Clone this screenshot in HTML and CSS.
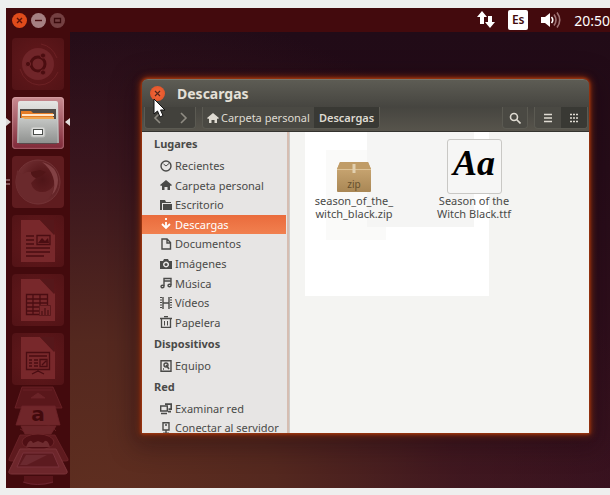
FILE: index.html
```html
<!DOCTYPE html>
<html lang="es">
<head>
<meta charset="utf-8">
<title>Descargas</title>
<link rel="stylesheet" href="styles.css">
</head>
<body>
<div class="screen">
  <header class="panel">
    <div class="panel-buttons">
      <button class="round close" aria-label="Cerrar"><svg viewBox="0 0 15 15"><path d="M5 5l5 5M10 5l-5 5" stroke="#5c1208" stroke-width="1.4"/></svg></button>
      <button class="round" aria-label="Minimizar"><svg viewBox="0 0 15 15"><path d="M4 7.500h7" stroke="#4a1012" stroke-width="1.4"/></svg></button>
      <button class="round dim" aria-label="Maximizar"><svg viewBox="0 0 15 15"><path d="M4.500 5.500h6v4h-6z" fill="none" stroke="#3a0a0c" stroke-width="1.3"/></svg></button>
    </div>
    <div class="indicators">
      <svg class="net" viewBox="0 0 18 18"><path d="M5 0l5 6H7v7H3V6H0zM13 17l-5-6h3V5h4v6h3z" fill="#fff"/></svg>
      <span class="lang">Es</span>
      <svg class="sound" viewBox="0 0 20 18"><path d="M0 6h4l5-4v14l-5-4H0z" fill="#fff"/><g fill="none" stroke-width="1.600"><path d="M10.500 6q2.500 3 0 6" stroke="#fff"/><path d="M13 3.500q4 5.500 0 11M16 1.500q5.500 7.500 0 15" stroke="#a07476"/></g></svg>
      <time>20:50</time>
    </div>
  </header>
  <div class="workspace">
    <nav class="launcher" aria-label="Lanzador">
      <button class="tile" aria-label="Inicio"><svg viewBox="0 0 52 52"><circle cx="26" cy="26" r="16" fill="#702529"/><circle cx="26" cy="26" r="7" fill="none" stroke="#4b0d10" stroke-width="3"/><g fill="#4b0d10" stroke="#702529"><circle cx="16" cy="26" r="2.600"/><circle cx="31" cy="17.500" r="2.600"/><circle cx="31" cy="34.500" r="2.600"/></g><path d="M8 31q5 15 19 16 13 0 19-13M45 20q-5-12-16-14" fill="none" stroke="#78282b" opacity=".6"/></svg></button>
      <button class="tile active" aria-label="Archivos"><svg viewBox="0 0 52 52">
        <defs><linearGradient id="cab" x2="0" y2="1"><stop offset="0" stop-color="#e6e6e4"/><stop offset="1" stop-color="#a4a6a4"/></linearGradient><linearGradient id="front" x2="0" y2="1"><stop offset="0" stop-color="#c6c8c6"/><stop offset="1" stop-color="#8f918f"/></linearGradient></defs>
        <path d="M6 6q0-2 2-2h36q2 0 2 2l1 40H5z" fill="url(#cab)"/><path d="M8 12h36v13H8z" fill="#504b47"/><path d="M9 14h10l2 2h20v10H9z" fill="#e57c26"/><path d="M10 17h32v2H10z" fill="#ffe7cb"/><path d="M10 20h32v2H10z" fill="#efa54f"/>
        <path d="M7 21h4l2 1h32v24H7z" fill="url(#front)"/><path d="M7 46h38v1H7z" fill="#5a4a4c"/><rect x="19" y="30" width="14" height="10" rx="2" fill="#d7d7d5" stroke="#b5b7b5"/><rect x="21.500" y="32.500" width="9" height="5" fill="#fff" stroke="#494c49"/></svg></button>
      <button class="tile flat" aria-label="Navegador"><svg viewBox="0 0 52 52">
        <defs><radialGradient id="globe" cx=".6" cy=".45"><stop offset="0" stop-color="#4f1518"/><stop offset=".5" stop-color="#5a1b1e"/><stop offset="1" stop-color="#6b2a2d"/></radialGradient></defs>
        <circle cx="26" cy="26" r="22" fill="url(#globe)" stroke="#733336"/><path d="M5 14q2 3 6 4 4-3 8-2 0 4 5 6l-5 5q2 8 9 9 9 1 14-7-1 16-16 18Q5 46 4 25z" fill="#6a292c"/><path d="M19 16l9-2 6 2-5 4-5 2q-5-2-5-6z" fill="#501517"/><path d="M30 6q15 4 16 18 0 9-6 15 4-10 1-18-3-9-11-15z" fill="#824144"/></svg></button>
      <button class="tile" aria-label="Documento de texto"><svg viewBox="0 0 52 52"><path d="M9 5h19l15 15v27H9z" fill="#78282b"/><path d="M28 5h14v15z" fill="#56171a"/><path d="M14 21h8M14 25h8M14 29h8M14 33h24M14 37h24M14 41h18" stroke="#4a0d12" stroke-width="1.600"/><path d="M25 20.500h13v9H25z" fill="none" stroke="#4a0d12" stroke-width="1.300"/><path d="M26 28l4-5 3 3 3-3 1 5z" fill="#4a0d12"/></svg></button>
      <button class="tile" aria-label="Hoja de cálculo"><svg viewBox="0 0 52 52"><path d="M9 5h19l15 15v27H9z" fill="#78282b"/><path d="M28 5h14v15z" fill="#56171a"/><path d="M14.500 20.500h21v20h-21zM14 25h22M14 29h22M14 33h22M14 37h22M21 20v21M28 20v21" fill="none" stroke="#4a0d12" stroke-width="1.300"/><path d="M27.500 31.500h11v10h-11z" fill="#78282b" stroke="#5b191c"/><path d="M30 41v-4M33 41v-7M36 41v-5" stroke="#5b191c" stroke-width="2"/></svg></button>
      <button class="tile" aria-label="Presentación"><svg viewBox="0 0 52 52"><path d="M9 4h19l15 15v27H9z" fill="#78282b"/><path d="M28 4h14v15z" fill="#56171a"/><path d="M14.500 19.500h23v17h-23zM26 36v3M20 41l6-3 6 3M17 23h18M17 27h3M17 30h3M17 33h3M22 27h4M22 30h4M22 33h4M28 26.500h7v7h-7zM30 32l4-4" fill="none" stroke="#4a0d12" stroke-width="1.300"/></svg></button>
      <svg class="stack" viewBox="0 0 64 105" aria-hidden="true">
        <g stroke="#6d2529" stroke-width=".8">
        <path d="M16 2h31l9 21H9z" fill="#5a171b"/><path d="M17 5h29M25 13l7-5 7 5z" fill="#6a2428"/>
        <path d="M16 21h33l5 19H10z" fill="#70262a"/>
        <path d="M15 41h35l-5 8H19z" fill="#6b2529"/><path d="M14 44q10 7 20 0t16 2" fill="none"/>
        <path d="M14 50h35l13 24q1 2-2 2H5q-3 0-2-2z" fill="#5e1a1e"/></g>
        <ellipse cx="32" cy="57" rx="16" ry="8" fill="#4f0f14" stroke="#6d2529"/><path d="M20 62q4-10 7-4l5-2 5 2q4-6 7 4z" fill="#6f2c30"/>
        <path d="M14 64h36l11 22q1 3-3 3H6q-4 0-3-3z" fill="#6d262b" stroke="#7b3339"/><path d="M17 68h30l6 14H11z" fill="#5c1a1f" stroke="#79303a"/><path d="M20 70h21L21 80h-7z" fill="#6b292f"/>
        <path d="M18 91h29v7q-14 4-29 0z" fill="#59151a"/><path d="M17 97q14 5 30 0" stroke="#6b2530" fill="none"/>
        <text x="32" y="36" class="shop">a</text>
      </svg>
      <svg class="marker left" viewBox="0 0 5 8"><path d="M0 0l5 4-5 4z"/></svg>
      <svg class="marker right" viewBox="0 0 5 8"><path d="M5 0L0 4l5 4z"/></svg>
      <span class="pips"></span>
    </nav>
    <main class="desktop">
      <section class="window">
        <header class="titlebar">
          <button class="round close" aria-label="Cerrar ventana"><svg viewBox="0 0 15 15"><path d="M5 5l5 5M10 5l-5 5" stroke="#55251a" stroke-width="1.200"/></svg></button>
          <h1>Descargas</h1>
          <svg class="pointer" viewBox="0 0 13 20"><path d="M1 1v15l3.500-3 2.500 6 3-1.500L7.500 12H12z" fill="#fff" stroke="#111"/></svg>
        </header>
        <div class="toolbar">
          <div class="group history">
            <button aria-label="Atrás"><svg viewBox="0 0 12 12"><path d="M8 1L3 6l5 5"/></svg></button>
            <button aria-label="Adelante"><svg viewBox="0 0 12 12"><path d="M4 1l5 5-5 5"/></svg></button>
          </div>
          <div class="group path">
            <button><svg viewBox="0 0 12 12"><path d="M6 1l6 5-1 1-1-.6V11H7.500V8h-3v3H2V6.400L1 7 0 6z" fill="#dfdbd2"/></svg>Carpeta personal</button>
            <button class="pressed">Descargas</button>
          </div>
          <div class="group search"><button aria-label="Buscar"><svg viewBox="0 0 12 12"><circle cx="5" cy="5" r="3.500"/><path d="M7.500 7.500l4 4"/></svg></button></div>
          <div class="group views">
            <button aria-label="Lista"><svg viewBox="0 0 12 12"><path d="M2 2.500h8M2 6h8M2 9.500h8"/></svg></button>
            <button class="pressed" aria-label="Cuadrícula"><svg viewBox="0 0 12 12"><path d="M2 2.500h8M2 6h8M2 9.500h8" stroke-dasharray="2 1"/></svg></button>
          </div>
        </div>
        <div class="content">
          <aside class="sidebar">
            <h2>Lugares</h2>
            <ul class="places">
              <li><a href="#"><svg viewBox="0 0 12 12"><circle cx="6" cy="6" r="5"/><path d="M3.500 4L6 6l3-2.500" stroke-width="1"/></svg>Recientes</a></li>
              <li><a href="#"><svg viewBox="0 0 12 12"><path class="solid" d="M6 1l6 5-1 1-1-.6V11H7.500V8h-3v3H2V6.400L1 7 0 6z"/></svg>Carpeta personal</a></li>
              <li><a href="#"><svg viewBox="0 0 12 12"><path class="solid" d="M0 1h5l1 2h5v1H2v7H0zM3 5h9v6H3z"/></svg>Escritorio</a></li>
              <li><a href="#" class="selected"><svg viewBox="0 0 12 12"><path d="M2 6l4 4 4-4M6 4v6M6 0v2" stroke-width="1.800"/></svg>Descargas</a></li>
              <li><a href="#"><svg viewBox="0 0 12 12"><path d="M2 1h5l3.500 3.500V11H2zM7 1v4h3"/></svg>Documentos</a></li>
              <li><a href="#"><svg viewBox="0 0 12 12"><path class="solid" fill-rule="evenodd" d="M0 3h3l1-2h4l1 2h3v8H0zM6 3.500a3 3 0 1 0 .1 0z"/><circle class="solid" cx="6" cy="6.500" r="1.500"/></svg>Imágenes</a></li>
              <li><a href="#"><svg viewBox="0 0 12 12"><path d="M4 9V1.500h7V8M4 4h7"/><ellipse cx="2.500" cy="9.500" rx="1.500" ry="1.200"/><ellipse cx="9.500" cy="8.500" rx="1.500" ry="1.200"/></svg>Música</a></li>
              <li><a href="#"><svg viewBox="0 0 12 12"><path d="M3 0v12M9 0v12M3 6h6"/><path d="M1 0v12M11 0v12" stroke-dasharray="1 1.500" stroke-width="2"/></svg>Vídeos</a></li>
              <li><a href="#"><svg viewBox="0 0 12 12"><path d="M0 2.500h12M4 .700h4M1.500 3v8.300h9V3" stroke-width="1.300"/><path d="M4.500 5v4.500M7.500 5v4.500" stroke-width="1"/></svg>Papelera</a></li>
            </ul>
            <h2>Dispositivos</h2>
            <ul>
              <li><a href="#"><svg viewBox="0 0 12 12"><path d="M1 .700h10v10.600H1z"/><circle cx="6" cy="5" r="2"/><path d="M6 5l3 4M3 9h1" stroke-width="1.600"/></svg>Equipo</a></li>
            </ul>
            <h2>Red</h2>
            <ul>
              <li><a href="#"><svg viewBox="0 0 12 12"><path d="M.700 3h6.600v5H.700zM1 10.500h6"/><path d="M5 1.200h6.300v5H8.500M8 8.700h3" stroke-width="1.800"/></svg>Examinar red</a></li>
              <li><a href="#"><svg viewBox="0 0 12 12"><path d="M3 .700h6V8H3zM6 8v3M3 11.300h6M5 3h2"/></svg>Conectar al servidor</a></li>
            </ul>
          </aside>
          <div class="files">
            <figure class="file">
              <div class="thumb"><svg class="box" viewBox="0 0 34 30"><defs><linearGradient id="card" x2="0" y2="1"><stop offset="0" stop-color="#cfac78"/><stop offset="1" stop-color="#a98755"/></linearGradient></defs><path d="M3 0h28l3 7v22q0 1-1 1H1q-1 0-1-1V7z" fill="url(#card)"/><path d="M3 0h28l3 7H0z" fill="#c09c67"/><path d="M0 7.500h34" stroke="#ddc296"/><path d="M15.500 2h3v9h-3z" fill="#e2d0b0"/><text x="17" y="26" class="zip">zip</text></svg></div>
              <figcaption><span>season_of_the_</span><span>witch_black.zip</span></figcaption>
            </figure>
            <figure class="file">
              <div class="thumb"><span class="preview">Aa</span></div>
              <figcaption><span>Season of the</span><span>Witch Black.ttf</span></figcaption>
            </figure>
          </div>
        </div>
      </section>
    </main>
  </div>
</div>
</body>
</html>
```
FILE: styles.css
```css
* { box-sizing: border-box; }

body {
  margin: 0;
  height: 100vh;
  padding: 8px 0 7px 6px;
  overflow: hidden;
  background: #eeefee;
  font: 11px/13px "Noto Sans", "Open Sans", sans-serif;
  color: #4a4a48;
}

button {
  border: 0;
  padding: 0;
  margin: 0;
  background: none;
  font: inherit;
  color: inherit;
}

svg { display: block; flex: none; }
ul { list-style: none; margin: 0; padding: 0; }
h1, h2, figure { margin: 0; }

.screen { height: 100%; display: flex; flex-direction: column; }

.panel {
  display: flex;
  justify-content: space-between;
  height: 24px;
  flex: none;
  background: #430a0d;
  color: #fff;
}

.panel-buttons { display: flex; gap: 4px; align-items: center; padding-left: 6px; }
.round { width: 15px; height: 15px; border-radius: 50%; background: #a58082; flex: none; }
.round.close { background: #df4b1b; }
.round.dim { background: #744042; }

.indicators { display: flex; align-items: center; gap: 13px; font-size: 14px; }
.net { width: 18px; height: 18px; }
.sound { width: 20px; height: 18px; }
.lang {
  width: 20px;
  height: 20px;
  border-radius: 2px;
  background: #fff;
  color: #430a0d;
  font-size: 12px;
  font-weight: 600;
  line-height: 20px;
  text-align: center;
}

.workspace { display: flex; flex: 1; min-height: 0; }

.launcher {
  position: relative;
  display: flex;
  flex-direction: column;
  align-items: center;
  gap: 7px;
  width: 64px;
  flex: none;
  padding-top: 6px;
  overflow: hidden;
  background: #430a0d;
}

.tile {
  width: 52px;
  height: 52px;
  flex: none;
  border-radius: 4px;
  background: radial-gradient(#64191c, #521316);
}
.tile.flat { background: #5f1c1f; }
.tile.active {
  background: linear-gradient(#c98c91, #7f2837);
  box-shadow: inset 0 0 2px #f0c5c8;
}
.stack { width: 64px; height: 105px; margin-top: -7px; }
.shop { font: bold 20px "DejaVu Sans", sans-serif; text-anchor: middle; fill: #430a0d; }

.marker { position: absolute; top: 86px; width: 5px; height: 8px; fill: #e0dcda; }
.marker.left { left: 0; }
.marker.right { right: 0; }
.pips {
  position: absolute;
  left: 0;
  top: 147px;
  width: 4px;
  height: 6px;
  border: solid #86565a;
  border-width: 2px 0;
}

.desktop {
  flex: 1;
  min-width: 0;
  display: flex;
  padding: 47px 21px 55px 72px;
  background:
    radial-gradient(ellipse at 5% 105%, #602f20 0%, #54281f 25%, rgba(70, 28, 32, 0.6) 50%, rgba(50, 15, 28, 0) 75%),
    linear-gradient(#210b17 0%, #260c19 30%, #37111f 100%);
}

.window {
  flex: 1;
  min-width: 0;
  display: flex;
  flex-direction: column;
  border-radius: 6px 6px 0 0;
  box-shadow: 0 0 3px 1px #a93b10, 0 0 7px 2px #872b0c, 0 6px 24px 8px rgba(24, 5, 12, 0.35);
}

.titlebar {
  position: relative;
  display: flex;
  align-items: center;
  gap: 12px;
  height: 28px;
  flex: none;
  padding: 0 8px;
  border-top: 1px solid #77756b;
  border-radius: 6px 6px 0 0;
  background: linear-gradient(#5d5c54, #464540);
}
.titlebar .round { background: radial-gradient(#f4693c, #dd4f24); }
.titlebar h1 { font-size: 14px; line-height: 20px; color: #e4e0d7; }
.pointer { position: absolute; left: 11px; top: 17px; width: 13px; height: 22px; z-index: 1; }

.toolbar {
  display: flex;
  align-items: flex-start;
  height: 25px;
  flex: none;
  padding: 0 1px 0 2px;
  border-bottom: 1px solid #34332f;
  background: linear-gradient(#464540, #57544c);
  color: #dfdbd2;
}
.toolbar svg { width: 12px; height: 12px; fill: none; stroke: #dfdbd2; stroke-width: 1.6; }
.group {
  display: flex;
  height: 22px;
  border: 1px solid #5b5a52;
  border-top: 0;
  border-radius: 0 0 4px 4px;
  background: #4a4943;
  overflow: hidden;
}
.group button { display: flex; align-items: center; justify-content: center; gap: 2px; flex: 1; }
.group .pressed { background: #393934; font-weight: 600; }
.history { width: 52px; margin-right: 6px; background: #42413c; }
.history svg { stroke: #8f8c83; }
.path button { flex: none; padding: 0 4px; }
.path .pressed { padding: 0 5px; }
.path svg { stroke: none; }
.search { width: 26px; margin-left: auto; margin-right: 6px; }
.views { width: 54px; }

.content { display: flex; flex: 1; min-height: 0; background: #f4f4f2; }

.sidebar {
  width: 148px;
  flex: none;
  overflow: hidden;
  border-right: 1px solid #cfcdca;
  background: linear-gradient(90deg, transparent 145px, #d6bdb1 145px), #e7e5e4;
}
.sidebar h2 { padding-left: 12px; font-size: 11px; line-height: 24px; font-weight: 700; }
.sidebar ul { display: grid; grid-auto-rows: 19px; }
.sidebar .places { height: 176px; grid-auto-rows: 1fr; }
.sidebar a {
  display: flex;
  align-items: center;
  gap: 3px;
  height: 100%;
  width: 144px;
  padding-left: 18px;
  color: inherit;
  text-decoration: none;
  white-space: nowrap;
}
.sidebar svg { width: 12px; height: 12px; fill: none; stroke: currentColor; stroke-width: 1.4; }
.sidebar .solid { fill: currentColor; stroke: none; }
.sidebar .selected { background: linear-gradient(#ea6b3c, #f1804f); color: #fff; }

.files {
  flex: 1;
  min-width: 0;
  display: flex;
  align-items: flex-start;
  gap: 14px;
  padding: 6px 11px;
  background:
    linear-gradient(#f5f5f4, #f5f5f4) 77px 0 / 107px 95px no-repeat,
    linear-gradient(#fafaf9, #fafaf9) 36px 18px / 60px 90px no-repeat,
    linear-gradient(#fff, #fff) 15px 0 / 184px 164px no-repeat,
    #f4f4f2;
}
.file { width: 106px; flex: none; text-align: center; }
.file figcaption { display: grid; }
.thumb { display: flex; align-items: flex-end; justify-content: center; height: 56px; }
.box { width: 34px; height: 30px; margin-bottom: 2px; }
.zip { font: 10px "Noto Sans", sans-serif; text-anchor: middle; fill: #66502d; }
.preview {
  width: 55px;
  height: 55px;
  border: 1px solid #c9c8c5;
  border-radius: 3px;
  background: #f6f6f5;
  color: #000;
  font: italic bold 36px/46px "Liberation Serif", serif;
}
```
